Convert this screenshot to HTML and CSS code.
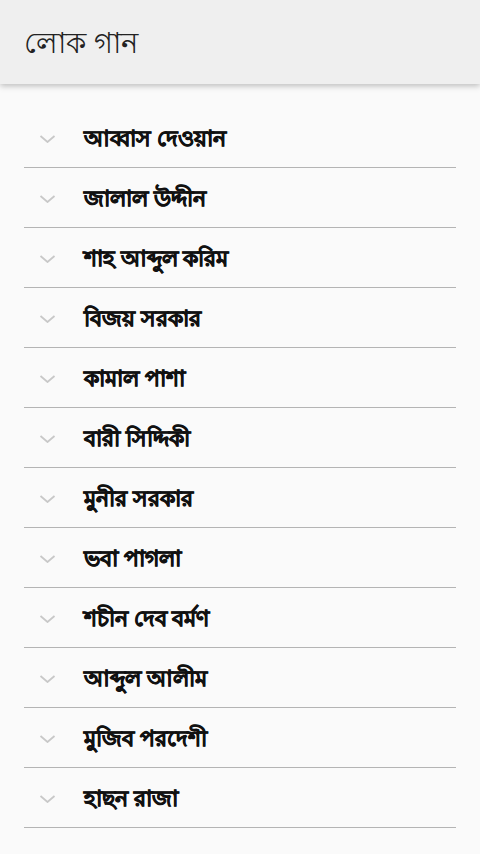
FILE: index.html
```html
<!DOCTYPE html>
<html>
<head>
<meta charset="utf-8">
<link rel="stylesheet" href="styles.css">
</head>
<body>
<header class="appbar"><h1 class="title">লোক গান</h1></header>
<ul class="list">
<li class="row"><svg class="chev" viewBox="0 0 16 8"><path d="M1 1l7 6 7-6"/></svg><span class="name">আব্বাস দেওয়ান</span></li>
<li class="row"><svg class="chev" viewBox="0 0 16 8"><path d="M1 1l7 6 7-6"/></svg><span class="name">জালাল উদ্দীন</span></li>
<li class="row"><svg class="chev" viewBox="0 0 16 8"><path d="M1 1l7 6 7-6"/></svg><span class="name">শাহ আব্দুল করিম</span></li>
<li class="row"><svg class="chev" viewBox="0 0 16 8"><path d="M1 1l7 6 7-6"/></svg><span class="name">বিজয় সরকার</span></li>
<li class="row"><svg class="chev" viewBox="0 0 16 8"><path d="M1 1l7 6 7-6"/></svg><span class="name">কামাল পাশা</span></li>
<li class="row"><svg class="chev" viewBox="0 0 16 8"><path d="M1 1l7 6 7-6"/></svg><span class="name">বারী সিদ্দিকী</span></li>
<li class="row"><svg class="chev" viewBox="0 0 16 8"><path d="M1 1l7 6 7-6"/></svg><span class="name">মুনীর সরকার</span></li>
<li class="row"><svg class="chev" viewBox="0 0 16 8"><path d="M1 1l7 6 7-6"/></svg><span class="name">ভবা পাগলা</span></li>
<li class="row"><svg class="chev" viewBox="0 0 16 8"><path d="M1 1l7 6 7-6"/></svg><span class="name">শচীন দেব বর্মণ</span></li>
<li class="row"><svg class="chev" viewBox="0 0 16 8"><path d="M1 1l7 6 7-6"/></svg><span class="name">আব্দুল আলীম</span></li>
<li class="row"><svg class="chev" viewBox="0 0 16 8"><path d="M1 1l7 6 7-6"/></svg><span class="name">মুজিব পরদেশী</span></li>
<li class="row"><svg class="chev" viewBox="0 0 16 8"><path d="M1 1l7 6 7-6"/></svg><span class="name">হাছন রাজা</span></li>
</ul>
</body>
</html>
```
FILE: styles.css
```css
html, body {
  margin: 0;
  padding: 0;
  background: #fafafa;
  font-family: "Noto Sans", "DejaVu Sans", sans-serif;
  height: 854px;
  overflow: hidden;
}
.appbar {
  height: 84px;
  background: #efefef;
  box-shadow: 0 2px 6px rgba(0,0,0,0.25);
  display: flex;
  align-items: center;
  padding-left: 24px;
  position: relative;
  z-index: 1;
}
.title {
  margin: 0;
  font-size: 29px;
  font-weight: normal;
  color: #222;
  line-height: 1;
  margin-top: -2px;
}
.list {
  list-style: none;
  margin: 24px 24px 0 24px;
  padding: 0;
}
.row {
  height: 59px;
  border-bottom: 1px solid #b4b4b4;
  display: flex;
  align-items: center;
}
.chev {
  width: 17px;
  height: 8px;
  margin-left: 15px;
  margin-right: 28px;
  margin-top: 2px;
  fill: none;
  stroke: #c8c8c8;
  stroke-width: 1.8;
}
.name {
  font-size: 21.6px;
  font-weight: bold;
  color: #111;
  -webkit-text-stroke: 0.7px #111;
  padding-top: 5px;
}
```
